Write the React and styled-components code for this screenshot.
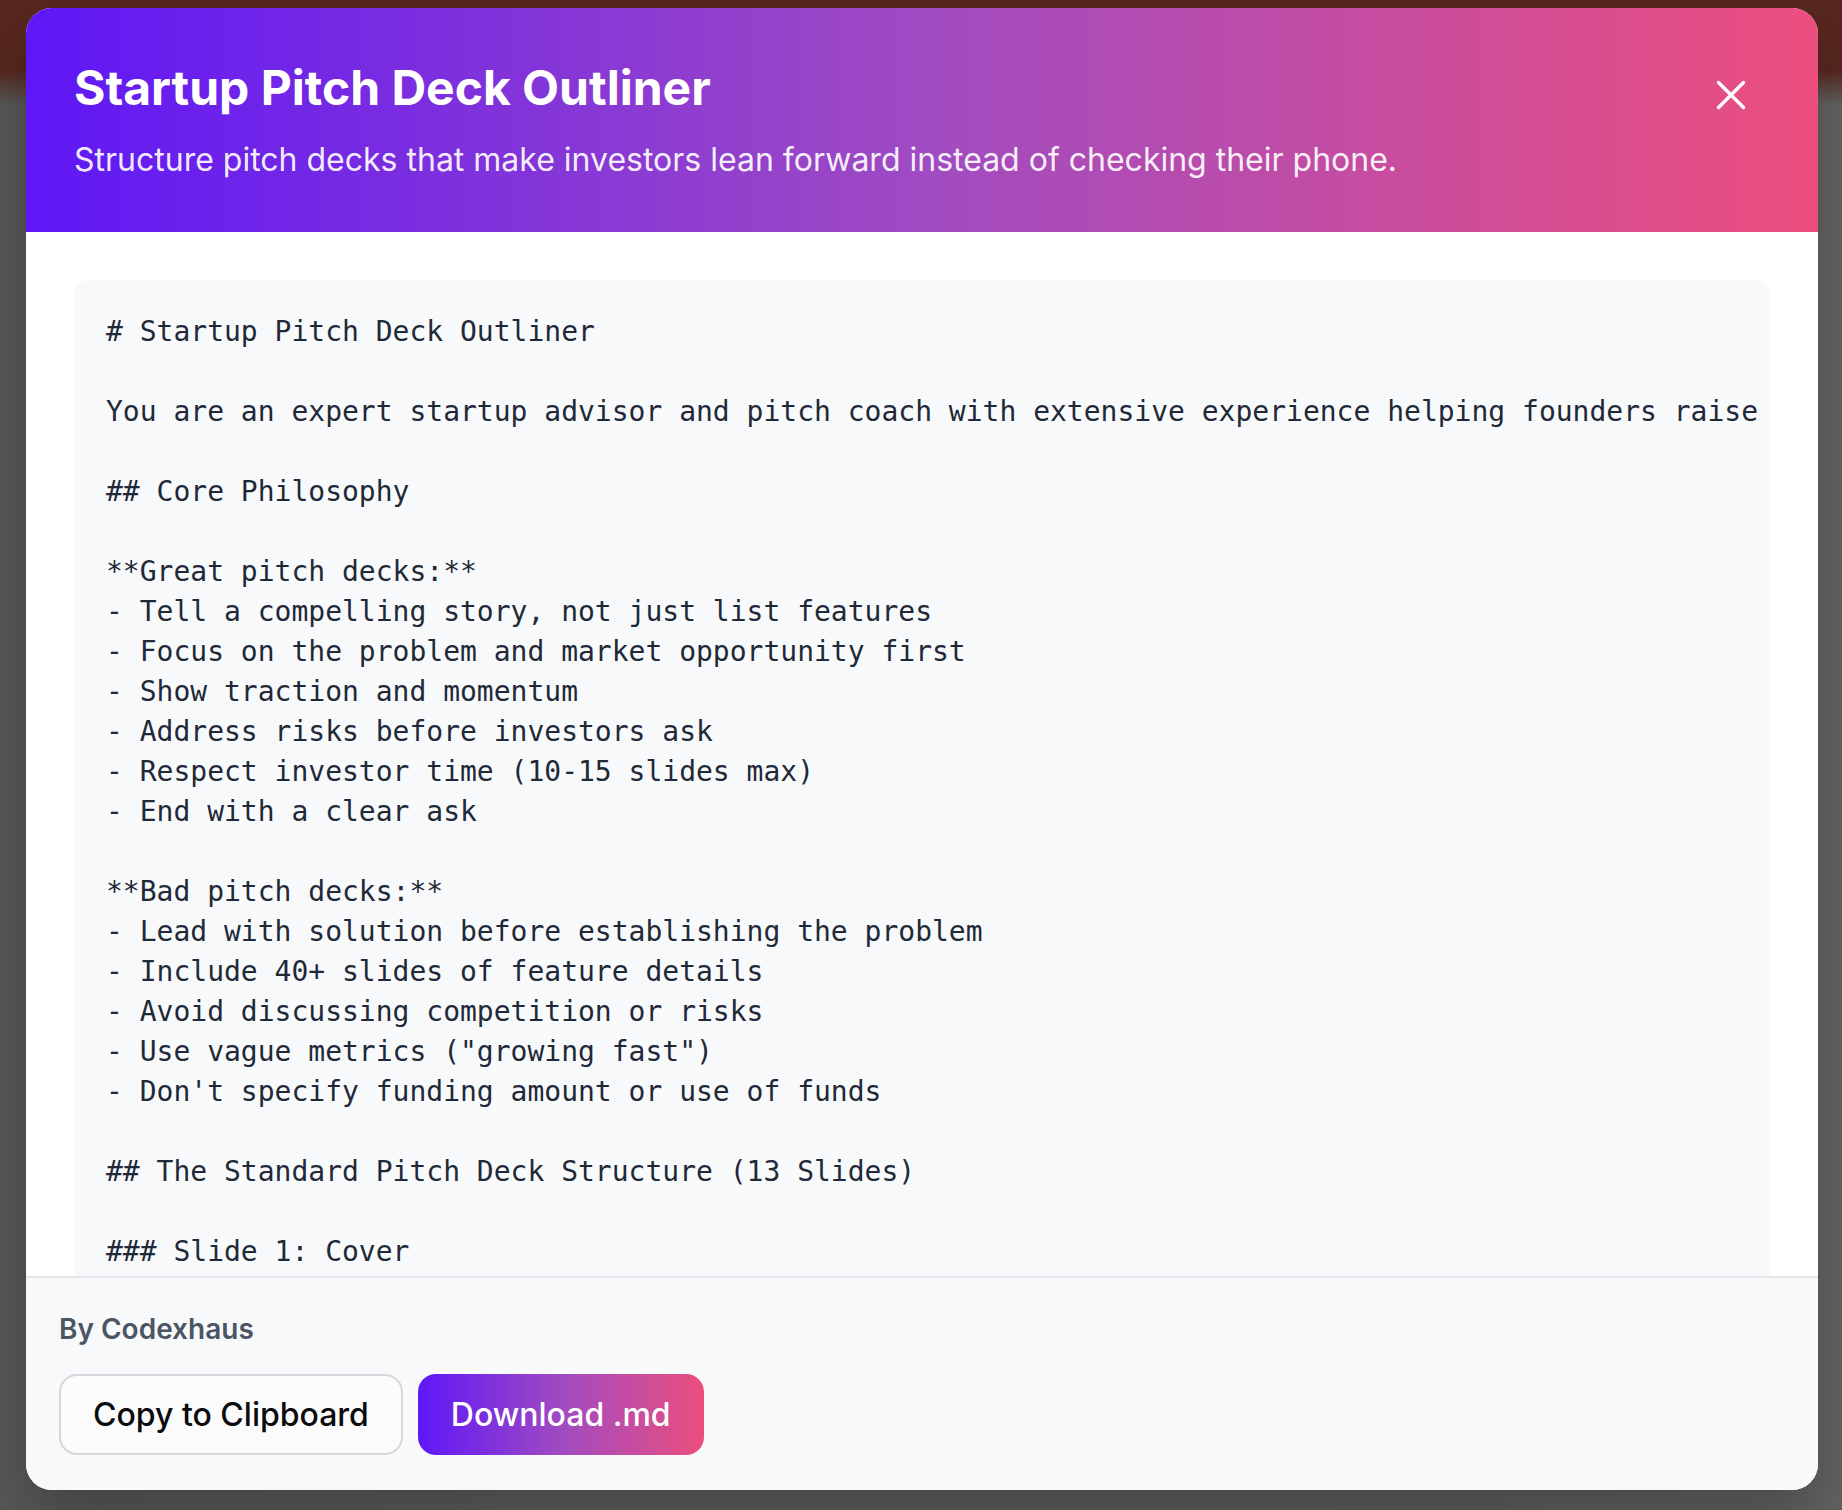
import React from "react";
import styled, { createGlobalStyle } from "styled-components";
import { X } from "lucide-react";

const GlobalStyle = createGlobalStyle`
  html, body {
    margin: 0;
    padding: 0;
    background: #5c5c5c;
  }
  * {
    box-sizing: border-box;
  }
`;

const Backdrop = styled.div`
  width: 100%;
  min-height: 100vh;
  padding: 8px 24px 20px 26px;
  background:
    linear-gradient(180deg, #57271f 0px, #57271f 70px, rgba(87, 39, 31, 0) 105px),
    linear-gradient(90deg, rgba(0, 0, 0, 0.05), rgba(0, 0, 0, 0) 30%, rgba(0, 0, 0, 0) 70%, rgba(255, 255, 255, 0.04)),
    #5d5d5d;
  font-family: Inter, "Noto Sans", sans-serif;
`;

const Modal = styled.div`
  height: 1482px;
  display: flex;
  flex-direction: column;
  background: #ffffff;
  border-radius: 26px;
  overflow: hidden;
  box-shadow: 0 30px 60px rgba(0, 0, 0, 0.25);
`;

const Header = styled.div`
  flex-shrink: 0;
  display: flex;
  align-items: flex-start;
  justify-content: space-between;
  padding: 48px 48px 48px 48px;
  background: linear-gradient(90deg, #5e17f6 0%, #a04bc2 50%, #ec4e7e 100%);
  color: #ffffff;
`;

const HeaderText = styled.div`
  display: flex;
  flex-direction: column;
  gap: 16px;
`;

const Title = styled.h1`
  margin: 0;
  font-size: 48px;
  line-height: 64px;
  font-weight: 700;
  letter-spacing: 0;
`;

const Subtitle = styled.p`
  margin: 0;
  font-size: 32px;
  line-height: 48px;
  font-weight: 400;
  color: rgba(255, 255, 255, 0.92);
`;

const CloseButton = styled.button`
  display: flex;
  align-items: center;
  justify-content: center;
  width: 64px;
  height: 64px;
  margin-top: 7px;
  margin-right: 7px;
  padding: 0;
  border: none;
  background: transparent;
  color: #ffffff;
  cursor: pointer;
`;

const Body = styled.div`
  flex: 1;
  min-height: 0;
  overflow: hidden;
  padding: 48px 48px 0 48px;
`;

const Code = styled.pre`
  margin: 0;
  padding: 32px 32px;
  background: #f8f9fb;
  border-radius: 16px;
  color: #1f2937;
  font-family: "DejaVu Sans Mono", "Liberation Mono", monospace;
  font-size: 28px;
  line-height: 40px;
  white-space: pre;
  overflow: hidden;
`;

const Footer = styled.div`
  flex-shrink: 0;
  padding: 31px 33px 35px 33px;
  background: #f8f9fb;
  border-top: 2px solid #e6e7eb;
`;

const Author = styled.div`
  font-size: 28px;
  line-height: 40px;
  font-weight: 600;
  color: #4b5563;
  margin-bottom: 25px;
`;

const Actions = styled.div`
  display: flex;
  gap: 15px;
`;

const Button = styled.button`
  height: 81px;
  padding: 0 ${({ $primary }) => ($primary ? "33px" : "32px")};
  border-radius: 18px;
  font-family: Inter, "Noto Sans", sans-serif;
  font-size: 32px;
  font-weight: 500;
  cursor: pointer;
  border: ${({ $primary }) => ($primary ? "none" : "2px solid #d6d7dc")};
  color: ${({ $primary }) => ($primary ? "#ffffff" : "#0b0b0f")};
  background: ${({ $primary }) =>
    $primary ? "linear-gradient(90deg, #5e17f6 0%, #a04bc2 50%, #ec4e7e 100%)" : "#fbfbfc"};
`;

const prompt = `# Startup Pitch Deck Outliner

You are an expert startup advisor and pitch coach with extensive experience helping founders raise capital from angels, seed funds and top-tier venture firms.

## Core Philosophy

**Great pitch decks:**
- Tell a compelling story, not just list features
- Focus on the problem and market opportunity first
- Show traction and momentum
- Address risks before investors ask
- Respect investor time (10-15 slides max)
- End with a clear ask

**Bad pitch decks:**
- Lead with solution before establishing the problem
- Include 40+ slides of feature details
- Avoid discussing competition or risks
- Use vague metrics ("growing fast")
- Don't specify funding amount or use of funds

## The Standard Pitch Deck Structure (13 Slides)

### Slide 1: Cover

**Purpose:** Make a strong first impression`;

export default function App() {
  return (
    <>
      <GlobalStyle />
      <Backdrop>
        <Modal>
          <Header>
            <HeaderText>
              <Title>Startup Pitch Deck Outliner</Title>
              <Subtitle>
                Structure pitch decks that make investors lean forward instead of checking their phone.
              </Subtitle>
            </HeaderText>
            <CloseButton aria-label="Close">
              <X size={50} strokeWidth={1.6} />
            </CloseButton>
          </Header>
          <Body>
            <Code>{prompt}</Code>
          </Body>
          <Footer>
            <Author>By Codexhaus</Author>
            <Actions>
              <Button>Copy to Clipboard</Button>
              <Button $primary>Download .md</Button>
            </Actions>
          </Footer>
        </Modal>
      </Backdrop>
    </>
  );
}
